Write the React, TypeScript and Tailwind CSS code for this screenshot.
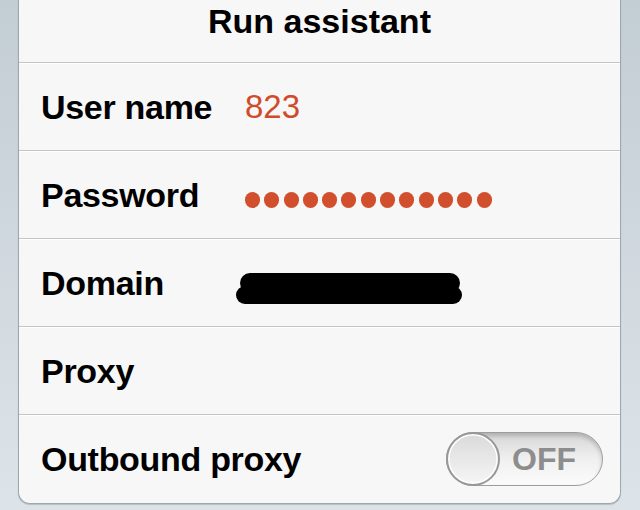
import React from 'react'

const font = { fontFamily: '"Liberation Sans", Arial, sans-serif' }

function Row({ label, children, last }: { label: string; children?: React.ReactNode; last?: boolean }) {
  return (
    <div
      className={`flex h-[88px] items-center pl-[22px] pr-[17px] shadow-[inset_0_1px_0_#ffffff] ${
        last ? '' : 'border-b border-[#c4c4c4]'
      }`}
    >
      <div className="min-w-[204px] shrink-0 whitespace-nowrap text-[34px] font-bold leading-none tracking-[-0.3px] text-black">
        {label}
      </div>
      <div className="flex flex-1 items-center">{children}</div>
    </div>
  )
}

function Toggle() {
  return (
    <div className="ml-auto flex h-[54px] w-[157px] items-center rounded-full border border-[#9d9d9d] bg-gradient-to-b from-[#d6d6d6] via-[#f0f0f0] to-[#fbfbfb] shadow-[inset_0_3px_4px_rgba(0,0,0,0.18)]">
      <div className="-ml-px h-[54px] w-[54px] shrink-0 rounded-full border-2 border-[#989898] bg-gradient-to-b from-[#dadada] to-[#f6f6f6] shadow-[inset_0_0_0_1.5px_#ffffff]" />
      <span className="ml-[12px] text-[32px] font-bold leading-none text-[#8d8d8d]">OFF</span>
    </div>
  )
}

export default function App() {
  return (
    <div
      className="min-h-[510px] w-[640px] bg-gradient-to-b from-[#c3cdd4] to-[#dde4e9] pl-[18px]"
      style={font}
    >
      <div className="w-[603px] overflow-hidden rounded-b-[12px] border-x border-b border-[#9ca7af] bg-[#f7f7f7] shadow-[0_1px_1px_rgba(120,135,145,0.4)]">
        <div className="flex h-[63px] justify-center border-b border-[#c4c4c4] pt-[4px]">
          <h1 className="text-[34px] font-bold leading-none text-black">Run assistant</h1>
        </div>

        <Row label="User name">
          <span className="text-[33px] leading-none text-[#d04b2b]">823</span>
        </Row>

        <Row label="Password">
          <div className="mt-[10px] flex gap-[4.3px]">
            {Array.from({ length: 13 }).map((_, i) => (
              <span key={i} className="h-[16px] w-[15px] rounded-full bg-[#d14f2c]" />
            ))}
          </div>
        </Row>

        <Row label="Domain">
          <svg width="228" height="34" viewBox="0 0 228 34" className="-ml-[9px] mt-[10px]">
            <line x1="14" y1="12" x2="214" y2="12" stroke="#000" strokeWidth="20" strokeLinecap="round" />
            <line x1="9" y1="24" x2="217" y2="24" stroke="#000" strokeWidth="18" strokeLinecap="round" />
          </svg>
        </Row>

        <Row label="Proxy" />

        <Row label="Outbound proxy" last>
          <Toggle />
        </Row>
      </div>
    </div>
  )
}
